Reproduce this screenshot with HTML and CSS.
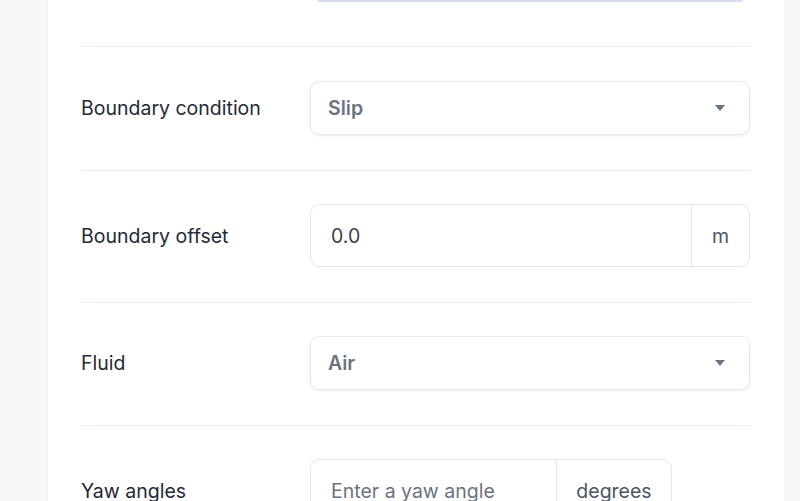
FILE: index.html
```html
<!DOCTYPE html>
<html>
<head>
<meta charset="utf-8">
<link rel="stylesheet" href="styles.css">
</head>
<body>
<div class="page">
  <div class="card">
    <div class="row row-top">
      <div></div>
      <div class="top-bar"></div>
    </div>
    <div class="row row-first">
      <div class="label">Boundary condition</div>
      <div class="select">
        <span class="select-value">Slip</span>
        <span class="caret"></span>
      </div>
    </div>
    <div class="row">
      <div class="label">Boundary offset</div>
      <div class="input-group">
        <div class="input-field">0.0</div>
        <div class="addon addon-m">m</div>
      </div>
    </div>
    <div class="row">
      <div class="label">Fluid</div>
      <div class="select">
        <span class="select-value">Air</span>
        <span class="caret"></span>
      </div>
    </div>
    <div class="row row-last">
      <div class="label">Yaw angles</div>
      <div class="input-group input-group-yaw">
        <div class="input-field placeholder">Enter a yaw angle</div>
        <div class="addon addon-deg">degrees</div>
      </div>
    </div>
  </div>
</div>
</body>
</html>
```
FILE: styles.css
```css
html, body {
  margin: 0;
  padding: 0;
  height: 100%;
  overflow: hidden;
}
body {
  background: #f8f8f9;
  font-family: Inter, "Noto Sans", sans-serif;
  color: #1f2937;
}
.page {
  padding: 0 16px 0 47px;
  height: 100%;
}
.card {
  background: #ffffff;
  height: 100%;
  padding: 0 33px 0 33px;
  border-left: 1px solid #f0f1f3;
}
.row {
  display: grid;
  grid-template-columns: 229px 440px;
  align-items: center;
  padding: 33px 0 35px;
  border-bottom: 1px solid #eceef3;
}
.row-top {
  padding: 0 0 44px;
}
.row-first {
  padding-top: 34px;
}
.row-last {
  border-bottom: none;
}
.top-bar {
  height: 2px;
  margin: 0 7px;
  background: #d9dbee;
  border-radius: 0 0 4px 4px;
}
.label {
  font-size: 19.5px;
  font-weight: 400;
  color: #1f2937;
}
.select {
  box-sizing: border-box;
  height: 54px;
  border: 1px solid #e7e8ec;
  border-radius: 9px;
  box-shadow: 0 1px 3px rgba(0, 0, 0, 0.08);
  display: flex;
  align-items: center;
  justify-content: space-between;
  padding: 0 24px 0 17px;
}
.select-value {
  font-size: 19.5px;
  font-weight: 600;
  color: #6b7280;
}
.caret {
  width: 0;
  height: 0;
  border-left: 5.5px solid transparent;
  border-right: 5.5px solid transparent;
  border-top: 6px solid #6b7280;
}
.input-group {
  box-sizing: border-box;
  height: 63px;
  border: 1px solid #e3e5ea;
  border-radius: 9px;
  display: flex;
  align-items: stretch;
  overflow: hidden;
}
.input-group-yaw {
  width: 362px;
}
.input-field {
  flex: 1;
  display: flex;
  align-items: center;
  padding: 0 20px;
  font-size: 19.5px;
  color: #374151;
}
.placeholder {
  color: #6b7280;
}
.addon {
  display: flex;
  align-items: center;
  justify-content: center;
  border-left: 1px solid #e3e5ea;
  font-size: 19.5px;
  color: #4b5563;
}
.addon-m {
  width: 57px;
}
.addon-deg {
  width: 114px;
}
```
